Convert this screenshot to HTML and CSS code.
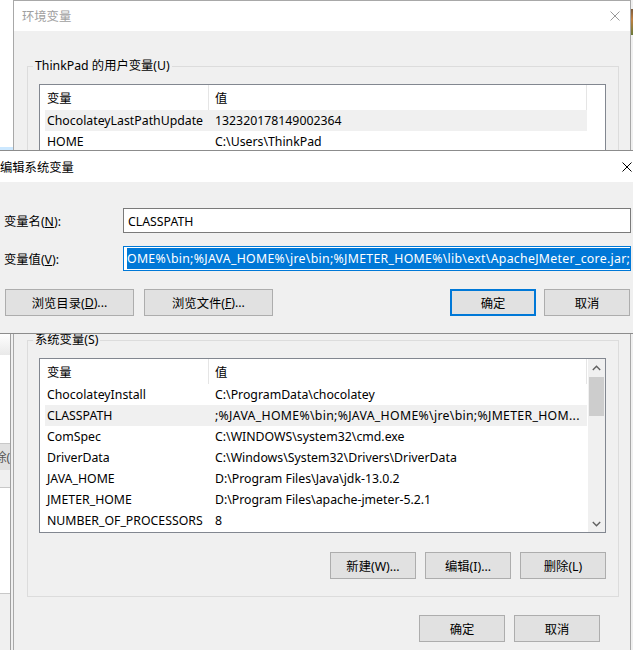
FILE: index.html
```html
<!DOCTYPE html>
<html lang="zh-CN">
<head>
<meta charset="utf-8">
<title>环境变量</title>
<link rel="stylesheet" href="styles.css">
</head>
<body>
<div class="desktop">

  <div class="backdrop-left">
    <div class="bl-white-top"></div>
    <div class="bl-sel"></div>
    <div class="bl-hidden"></div>
    <div class="bl-lower">
      <div class="bl-head"></div>
      <div class="bl-white" style="height:88px"></div>
      <div class="bl-btnrow"><span class="bl-btn">删除(L)</span></div>
      <div class="bl-grey" style="height:17px"></div>
      <div class="bl-white bl-line" style="height:106px"></div>
      <div class="bl-grey bl-line" style="height:57px"></div>
    </div>
  </div>

  <div class="backdrop-right">
    <div class="br-pic"></div>
  </div>

  <section class="win env">
    <header class="titlebar">
      <span class="title">环境变量</span>
      <svg class="close" width="10" height="10" viewBox="0 0 10 10"><path d="M0.5 0.5 L9.5 9.5 M9.5 0.5 L0.5 9.5" stroke="#9a9a9a" stroke-width="1" fill="none"/></svg>
    </header>
    <div class="env-body">
      <fieldset class="group user">
        <legend>ThinkPad 的用户变量(U)</legend>
        <div class="listbox user-list">
          <div class="lv">
            <div class="lv-head"><span class="h1">变量</span><span class="h2">值</span></div>
            <div class="row sel"><span class="c1">ChocolateyLastPathUpdate</span><span class="c2">132320178149002364</span></div>
            <div class="row"><span class="c1">HOME</span><span class="c2">C:\Users\ThinkPad</span></div>
          </div>
        </div>
      </fieldset>

      <fieldset class="group sys">
        <legend>系统变量(S)</legend>
        <div class="listbox sys-list">
          <div class="lv">
            <div class="lv-head"><span class="h1">变量</span><span class="h2">值</span></div>
            <div class="row"><span class="c1">ChocolateyInstall</span><span class="c2">C:\ProgramData\chocolatey</span></div>
            <div class="row sel"><span class="c1">CLASSPATH</span><span class="c2 pct">;%JAVA_HOME%\bin;%JAVA_HOME%\jre\bin;%JMETER_HOM...</span></div>
            <div class="row"><span class="c1">ComSpec</span><span class="c2">C:\WINDOWS\system32\cmd.exe</span></div>
            <div class="row"><span class="c1">DriverData</span><span class="c2">C:\Windows\System32\Drivers\DriverData</span></div>
            <div class="row"><span class="c1">JAVA_HOME</span><span class="c2">D:\Program Files\Java\jdk-13.0.2</span></div>
            <div class="row"><span class="c1">JMETER_HOME</span><span class="c2">D:\Program Files\apache-jmeter-5.2.1</span></div>
            <div class="row"><span class="c1">NUMBER_OF_PROCESSORS</span><span class="c2">8</span></div>
          </div>
          <div class="vscroll">
            <div class="sb-arrow"><svg width="9" height="6" viewBox="0 0 9 6"><path d="M0.8 5 L4.5 1.3 L8.2 5" stroke="#606060" stroke-width="1.4" fill="none"/></svg></div>
            <div class="sb-thumb"></div>
            <div class="sb-track"></div>
            <div class="sb-arrow"><svg width="9" height="6" viewBox="0 0 9 6"><path d="M0.8 1 L4.5 4.7 L8.2 1" stroke="#606060" stroke-width="1.4" fill="none"/></svg></div>
          </div>
        </div>
        <div class="btnrow">
          <button class="btn">新建(W)...</button>
          <button class="btn">编辑(I)...</button>
          <button class="btn">删除(L)</button>
        </div>
      </fieldset>

      <div class="footer">
        <button class="btn">确定</button>
        <button class="btn">取消</button>
      </div>
    </div>
  </section>

  <section class="win edit">
    <header class="titlebar">
      <span class="title">编辑系统变量</span>
      <svg class="close" width="10" height="10" viewBox="0 0 10 10"><path d="M0.5 0.5 L9.5 9.5 M9.5 0.5 L0.5 9.5" stroke="#000" stroke-width="1" fill="none"/></svg>
    </header>
    <div class="edit-body">
      <div class="field">
        <label class="flabel">变量名(<u>N</u>):</label>
        <div class="input">CLASSPATH</div>
      </div>
      <div class="field">
        <label class="flabel">变量值(<u>V</u>):</label>
        <div class="input focus"><span class="selected">OME%\bin;%JAVA_HOME%\jre\bin;%JMETER_HOME%\lib\ext\ApacheJMeter_core.jar;</span></div>
      </div>
      <div class="edit-buttons">
        <div class="bgroup">
          <button class="btn wide">浏览目录(<u>D</u>)...</button>
          <button class="btn wide">浏览文件(<u>F</u>)...</button>
        </div>
        <div class="bgroup">
          <button class="btn default">确定</button>
          <button class="btn">取消</button>
        </div>
      </div>
    </div>
  </section>

</div>
</body>
</html>
```
FILE: styles.css
```css
* { box-sizing: border-box; }
html, body { margin: 0; padding: 0; }
body {
  font-family: "Noto Sans", "Noto Sans CJK SC", sans-serif;
  font-size: 12.3px;
  color: #000;
  background: #fff;
}
.desktop {
  position: relative;
  width: 633px;
  height: 650px;
  overflow: hidden;
  background: #fff;
}

/* background windows peeking out */
.backdrop-left {
  position: absolute;
  left: 0; top: 0;
  width: 13px; height: 650px;
  display: flex; flex-direction: column;
  background: #f0f0f0;
}
.bl-white-top { height: 147px; background: #fff; }
.bl-sel { height: 5px; background: #cce8ff; }
.bl-hidden { height: 181px; background: #fff; }
.bl-lower { flex: 1; display: flex; flex-direction: column; width: 11px; border-right: 1px solid #a0a0a0; overflow: hidden; }
.bl-head { height: 22px; background: linear-gradient(#fff, #e9e9e9); }
.bl-white { background: #fff; }
.bl-grey { background: #f0f0f0; }
.bl-line { border-top: 1px solid #c8c8c8; }
.bl-btnrow { height: 27px; border-top: 1px solid #c8c8c8; background: #e1e1e1; display: flex; align-items: center; overflow: hidden; }
.bl-btn { margin-left: -18px; white-space: nowrap; color: #555; }

.backdrop-right {
  position: absolute;
  left: 631px; top: 0;
  width: 2px; height: 650px;
  background: #f0f0f0;
}
.br-pic { margin-top: 9px; height: 26px; background: linear-gradient(#7a5a3a, #c08040 40%, #6a7a3a); }

/* windows */
.win {
  position: absolute;
  background: #f0f0f0;
}
.titlebar {
  background: #fff;
  display: flex;
  align-items: center;
  justify-content: space-between;
}
.close { display: block; }

.env {
  left: 13px; top: 0;
  width: 618px; height: 660px;
  border: 1px solid #a8a8a8;
}
.env .titlebar { height: 30px; padding: 0 10px 0 8px; color: #a0a0a0; }

.group {
  margin: 0 11px 0 13px;
  border: 1px solid #dcdcdc;
  padding: 8px 12px 17px 11px;
  min-width: 0;
}
.group legend {
  padding: 0 2px;
  margin-left: -6px;
  line-height: 20px;
}
.group.user { margin-top: 25px; padding-bottom: 14px; }
.group.sys { margin-top: 31px; }

.listbox {
  background: #fff;
  border: 1px solid #828790;
  display: flex;
  height: 175px;
}
.user-list { height: 200px; }
.lv { width: 548px; padding-left: 5px; }
.lv-head { display: flex; height: 25px; }
.lv-head .h1, .lv-head .h2 {
  display: flex; align-items: center;
  border-right: 1px solid #e5e5e5;
}
.lv-head .h1 { width: 164px; padding-left: 2px; }
.lv-head .h2 { width: 378px; padding-left: 6px; }
.row { display: flex; align-items: center; height: 21px; width: 542px; white-space: nowrap; }
.row.sel { background: #f0f0f0; }
.row .c1 { width: 170px; padding-left: 2px; flex: none; overflow: hidden; }
.row .c2 { flex: 1; overflow: hidden; }
.row .c2.pct { letter-spacing: 0.3px; }

.vscroll {
  width: 17px;
  margin-left: auto;
  background: #f0f0f0;
  display: flex; flex-direction: column;
}
.sb-arrow { height: 17px; display: flex; align-items: center; justify-content: center; }
.sb-thumb { height: 39px; margin: 1px 1px 0; background: #cdcdcd; }
.sb-track { flex: 1; }

.btn {
  width: 86px; height: 27px;
  background: #e1e1e1;
  border: 1px solid #adadad;
  font: inherit; color: #000;
  padding: 0; margin: 0;
  display: flex; align-items: center; justify-content: center;
}
.btn.default { border: 2px solid #0078d7; }
.btn.wide { width: 129px; }

.btnrow { margin-top: 19px; display: flex; justify-content: flex-end; gap: 9px; }
.footer { margin-top: 18px; padding-right: 30px; display: flex; justify-content: flex-end; gap: 9px; }

/* edit dialog */
.edit {
  left: -9px; top: 150px;
  width: 660px; height: 184px;
  border: 1px solid #8c8c8c;
}
.edit .titlebar { height: 31px; padding: 0 18px 0 8px; }
.edit-body { padding: 26px 0 0 12px; }
.field { display: flex; align-items: center; height: 25px; margin-bottom: 13px; }
.flabel { width: 119px; }
.input {
  width: 508px; height: 25px;
  background: #fff;
  border: 1px solid #7a7a7a;
  padding: 1px 3px 0 4px;
  display: flex; align-items: center;
  white-space: nowrap; overflow: hidden;
}
.input.focus { border-color: #0078d7; padding: 1px 3px; align-items: flex-start; }
.selected { background: #0078d7; color: #fff; line-height: 21px; display: inline-block; letter-spacing: 0.3px; }
.edit-buttons { margin-top: 18px; width: 626px; padding-left: 1px; display: flex; justify-content: space-between; }
.bgroup { display: flex; gap: 10px; }
.bgroup + .bgroup { gap: 8px; }
```
